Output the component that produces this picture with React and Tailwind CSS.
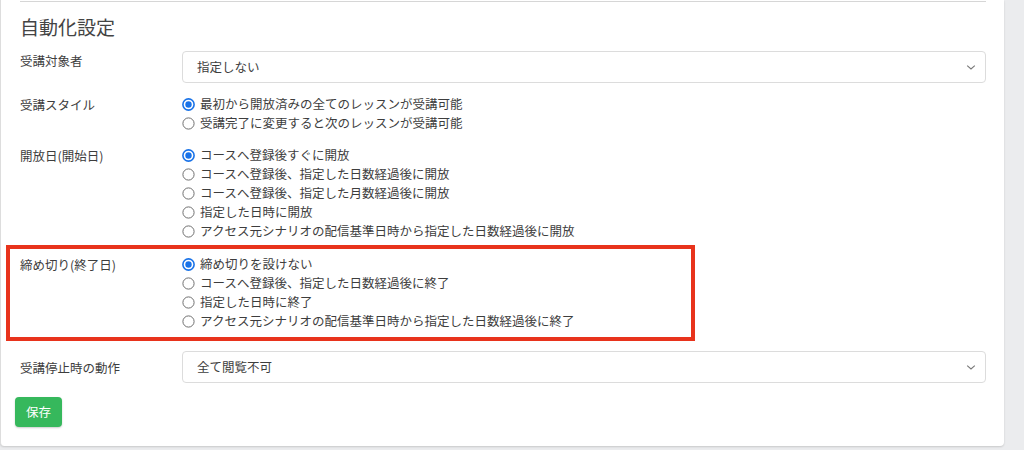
import React from "react";

const font = { fontFamily: '"Noto Sans CJK JP", "Noto Sans", sans-serif' };

function Radio({ checked, label }) {
  return (
    <div className="flex items-center h-[19px]">
      {checked ? (
        <svg width="13" height="13" viewBox="0 0 13 13" className="shrink-0">
          <circle cx="6.5" cy="6.5" r="5.6" fill="white" stroke="#1a73e8" strokeWidth="1.6" />
          <circle cx="6.5" cy="6.5" r="3.2" fill="#1a73e8" />
        </svg>
      ) : (
        <svg width="13" height="13" viewBox="0 0 13 13" className="shrink-0">
          <circle cx="6.5" cy="6.5" r="5.6" fill="white" stroke="#6f6f6f" strokeWidth="1" />
        </svg>
      )}
      <span className="ml-[5px] text-[12.5px] text-[#3d3d3d] whitespace-nowrap">{label}</span>
    </div>
  );
}

function Select({ value }) {
  return (
    <div className="flex-1 h-[32px] border border-[#dcdcdc] rounded-[4px] bg-white flex items-center justify-between pl-[14px] pr-[9px]">
      <span className="text-[12.5px] text-[#3d3d3d]">{value}</span>
      <svg width="10" height="7" viewBox="0 0 10 7">
        <path d="M1.2 1.6 L5 5 L8.8 1.6" fill="none" stroke="#777" strokeWidth="1.1" />
      </svg>
    </div>
  );
}

function Label({ children, className = "" }) {
  return (
    <div className={"w-[162px] shrink-0 text-[12.5px] text-[#3d3d3d] leading-[19px] " + className}>
      {children}
    </div>
  );
}

export default function App() {
  return (
    <div className="w-[1024px] h-[450px] bg-[#ebecee] overflow-hidden" style={font}>
      <div className="w-[1004px] h-[446px] bg-white border-l border-[#dddddd] rounded-b-[4px] shadow-[0_1px_2px_rgba(0,0,0,0.15)] pl-[19px] pr-[18px] flex flex-col">
        <div className="mt-[1px] border-t border-[#d6d6d6]" />
        <div className="mt-[13px] text-[19px] leading-[24px] text-[#444]">自動化設定</div>

        <div className="mt-[12px] flex items-start">
          <Label>受講対象者</Label>
          <Select value="指定しない" />
        </div>

        <div className="mt-[12px] flex items-start">
          <Label>受講スタイル</Label>
          <div className="flex flex-col">
            <Radio checked label="最初から開放済みの全てのレッスンが受講可能" />
            <Radio label="受講完了に変更すると次のレッスンが受講可能" />
          </div>
        </div>

        <div className="mt-[13px] flex items-start">
          <Label>開放日(開始日)</Label>
          <div className="flex flex-col">
            <Radio checked label="コースへ登録後すぐに開放" />
            <Radio label="コースへ登録後、指定した日数経過後に開放" />
            <Radio label="コースへ登録後、指定した月数経過後に開放" />
            <Radio label="指定した日時に開放" />
            <Radio label="アクセス元シナリオの配信基準日時から指定した日数経過後に開放" />
          </div>
        </div>

        <div className="mt-[14px] flex items-start relative">
          <div className="absolute left-[-14px] top-[-10px] w-[689px] h-[96px] border-[4px] border-[#e8331c] pointer-events-none" />
          <Label>締め切り(終了日)</Label>
          <div className="flex flex-col">
            <Radio checked label="締め切りを設けない" />
            <Radio label="コースへ登録後、指定した日数経過後に終了" />
            <Radio label="指定した日時に終了" />
            <Radio label="アクセス元シナリオの配信基準日時から指定した日数経過後に終了" />
          </div>
        </div>

        <div className="mt-[20px] flex items-center">
          <Label>受講停止時の動作</Label>
          <Select value="全て閲覧不可" />
        </div>

        <div className="mt-[14px]">
          <button className="ml-[-5px] w-[47px] h-[30px] rounded-[4px] bg-[#36b85c] text-white text-[12.5px] shadow-[0_1px_2px_rgba(0,0,0,0.2)]">
            保存
          </button>
        </div>
      </div>
    </div>
  );
}
